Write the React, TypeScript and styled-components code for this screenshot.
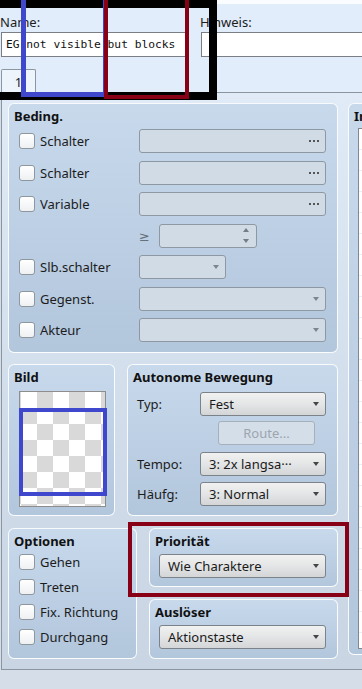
import React from 'react';
import styled, { createGlobalStyle } from 'styled-components';

const GlobalStyle = createGlobalStyle`
  html, body {
    margin: 0;
    padding: 0;
  }
  body {
    background: #d4dde8;
    font-family: 'Noto Sans', 'DejaVu Sans', sans-serif;
    font-size: 13px;
    color: #1c1c1c;
  }
`;

const Window = styled.div`
  position: relative;
  width: 362px;
  height: 689px;
  overflow: hidden;
  background: #d4dde8;
`;

const Header = styled.div`
  background: #e1edfb;
  border-top: 4px solid #fafcff;
  padding-top: 10px;
`;

const FieldRow = styled.div`
  display: flex;
  align-items: flex-start;
`;

const Field = styled.div<{ $width: number; $offset: number }>`
  display: flex;
  flex-direction: column;
  flex: none;
  width: ${(p) => p.$width}px;
  margin-left: ${(p) => p.$offset}px;
`;

const FieldLabel = styled.label`
  line-height: 16px;
  white-space: nowrap;
`;

const TextInput = styled.input`
  box-sizing: border-box;
  display: block;
  width: 100%;
  height: 25px;
  margin: 2px 0 0 1px;
  padding: 0 4px;
  border: 1px solid #7a7f86;
  border-radius: 0;
  background: #fff;
  color: #111;
  font-family: 'DejaVu Sans Mono', 'Liberation Mono', monospace;
  font-size: 11.25px;
  outline: none;
`;

const TabStrip = styled.div`
  display: flex;
  margin-top: 12px;
  padding-left: 1px;
`;

const Tab = styled.div`
  box-sizing: border-box;
  width: 35px;
  height: 23px;
  border: 1px solid #8c96a1;
  border-bottom: none;
  border-radius: 2px 2px 0 0;
  background: #eef4fb;
  text-align: center;
  line-height: 24px;
`;

const TabPage = styled.div`
  box-sizing: border-box;
  display: flex;
  align-items: flex-start;
  gap: 10px;
  width: 420px;
  height: 578px;
  margin-left: 1px;
  padding: 10px 0 0 6px;
  border: 1px solid #8b95a0;
  border-right: none;
  background: linear-gradient(#e0ebf7, #d0dce9 60%, #c9d5e2);
`;

const LeftColumn = styled.div`
  display: flex;
  flex-direction: column;
  gap: 11px;
  width: 330px;
  flex: none;
`;

const SplitRow = styled.div<{ $gapTop?: number }>`
  display: flex;
  gap: 12px;
  margin-top: ${(p) => p.$gapTop ?? 0}px;
`;

const Stack = styled.div<{ $width: number }>`
  display: flex;
  flex-direction: column;
  gap: 12px;
  width: ${(p) => p.$width}px;
`;

const Group = styled.div<{ $width?: number; $height?: number; $padBottom?: number }>`
  box-sizing: border-box;
  display: flex;
  flex-direction: column;
  flex: none;
  ${(p) => (p.$width ? `width: ${p.$width}px;` : '')}
  ${(p) => (p.$height ? `height: ${p.$height}px;` : '')}
  padding-bottom: ${(p) => p.$padBottom ?? 0}px;
  border: 1px solid rgba(255, 255, 255, 0.9);
  border-radius: 6px;
  background: linear-gradient(#c8d9ec, #b2c6dc);
`;

const GroupTitle = styled.div`
  padding: 4px 0 0 5px;
  line-height: 16px;
  font-weight: 700;
  color: #111;
  white-space: nowrap;
`;

const CondGrid = styled.div`
  display: grid;
  grid-template-columns: 120px 187px;
  grid-auto-rows: 24px;
  row-gap: 7.5px;
  margin-top: 5px;
  padding-left: 10px;
  align-items: center;
`;

const CheckRow = styled.div`
  display: flex;
  align-items: center;
  gap: 5px;
  height: 16px;
  line-height: 16px;
  white-space: nowrap;
`;

const CheckBox = styled.span`
  box-sizing: border-box;
  width: 16px;
  height: 16px;
  flex: none;
  border: 1px solid #8e979f;
  border-radius: 3px;
  background: linear-gradient(#ffffff, #eef0f2);
`;

const InputBox = styled.div<{ $width?: number; $disabled?: boolean }>`
  box-sizing: border-box;
  display: flex;
  align-items: center;
  justify-content: space-between;
  width: ${(p) => (p.$width ? `${p.$width}px` : '100%')};
  height: 24px;
  padding: 0 6px 0 8px;
  border: 1px solid ${(p) => (p.$disabled ? '#8d98a3' : '#7b828a')};
  border-radius: 3px;
  background: ${(p) =>
    p.$disabled ? '#d0dbe6' : 'linear-gradient(#f1f1f1, #e4e5e6 50%, #d4d5d6)'};
  color: #1a1a1a;
  white-space: nowrap;
  overflow: hidden;
`;

const DownArrow = styled.span<{ $disabled?: boolean }>`
  flex: none;
  width: 0;
  height: 0;
  border-left: 3.5px solid transparent;
  border-right: 3.5px solid transparent;
  border-top: 4px solid ${(p) => (p.$disabled ? '#7c858e' : '#454545')};
`;

const UpArrow = styled.span`
  width: 0;
  height: 0;
  border-left: 3.5px solid transparent;
  border-right: 3.5px solid transparent;
  border-bottom: 4px solid #747d86;
`;

const SpinArrows = styled.span`
  display: flex;
  flex-direction: column;
  align-items: center;
  gap: 7px;
  margin-right: 1px;
  & > span:last-child {
    border-bottom: none;
    border-top: 4px solid #747d86;
  }
`;

const SpinRow = styled.div`
  display: flex;
  align-items: center;
`;

const GeSign = styled.span`
  width: 20px;
  color: #66707b;
  font-size: 13px;
`;

const MoveGrid = styled.div`
  display: grid;
  grid-template-columns: 63px 126px;
  grid-auto-rows: 24px;
  row-gap: 6px;
  margin-top: 7px;
  padding-left: 9px;
  align-items: center;
`;

const RouteButton = styled.div`
  box-sizing: border-box;
  grid-column: 2;
  width: 97px;
  height: 24px;
  margin: -2px 0 0 18px;
  border: 1px solid #a6b0ba;
  border-radius: 3px;
  background: #d4dee9;
  color: #9ca5ae;
  text-align: center;
  line-height: 22px;
`;

const Preview = styled.div`
  box-sizing: border-box;
  width: 87px;
  height: 116px;
  margin: 6px 0 0 10px;
  border: 1px solid #8d8d8d;
  background-color: #fff;
  background-image: conic-gradient(#d9d9d9 25%, #fff 0 50%, #d9d9d9 0 75%, #fff 0);
  background-size: 32px 32px;
  background-position: 1px 0;
`;

const OptionList = styled.div`
  display: flex;
  flex-direction: column;
  gap: 9px;
  margin-top: 5px;
  padding-left: 10px;
`;

const PaddedCombo = styled.div`
  margin-top: 5px;
  padding-left: 9px;
`;

const ListBox = styled.div`
  box-sizing: border-box;
  height: 521px;
  margin: 4px 0 0 9px;
  border: 1px solid #828790;
  background: repeating-linear-gradient(#ffffff 0 20px, #e9eff6 20px 21px);
`;

const Mark = styled.div<{ $x: number; $y: number; $w: number; $h: number; $color: string; $t: number }>`
  position: absolute;
  box-sizing: border-box;
  left: ${(p) => p.$x}px;
  top: ${(p) => p.$y}px;
  width: ${(p) => p.$w}px;
  height: ${(p) => p.$h}px;
  border: ${(p) => p.$t}px solid ${(p) => p.$color};
  pointer-events: none;
`;

const Dots = () => (
  <svg width="10" height="2" viewBox="0 0 10 2">
    <rect x="0" y="0" width="2" height="2" fill="#555" />
    <rect x="4" y="0" width="2" height="2" fill="#555" />
    <rect x="8" y="0" width="2" height="2" fill="#555" />
  </svg>
);

const Check: React.FC<{ label: string }> = ({ label }) => (
  <CheckRow>
    <CheckBox />
    <span>{label}</span>
  </CheckRow>
);

const Combo: React.FC<{ value?: string; width?: number; disabled?: boolean }> = ({
  value,
  width,
  disabled,
}) => (
  <InputBox $width={width} $disabled={disabled}>
    <span>{value}</span>
    <DownArrow $disabled={disabled} />
  </InputBox>
);

const App: React.FC = () => {
  return (
    <>
      <GlobalStyle />
      <Window>
        <Header>
          <FieldRow>
            <Field $width={186} $offset={0}>
              <FieldLabel>Name:</FieldLabel>
              <TextInput readOnly value="EG not visible but blocks" />
            </Field>
            <Field $width={200} $offset={14}>
              <FieldLabel>Hinweis:</FieldLabel>
              <TextInput readOnly value="" />
            </Field>
          </FieldRow>
          <TabStrip>
            <Tab>1</Tab>
          </TabStrip>
        </Header>

        <TabPage>
          <LeftColumn>
            <Group $padBottom={10}>
              <GroupTitle>Beding.</GroupTitle>
              <CondGrid>
                <Check label="Schalter" />
                <InputBox $disabled>
                  <span />
                  <Dots />
                </InputBox>
                <Check label="Schalter" />
                <InputBox $disabled>
                  <span />
                  <Dots />
                </InputBox>
                <Check label="Variable" />
                <InputBox $disabled>
                  <span />
                  <Dots />
                </InputBox>
                <span />
                <SpinRow>
                  <GeSign>≥</GeSign>
                  <InputBox $width={98} $disabled>
                    <span />
                    <SpinArrows>
                      <UpArrow />
                      <UpArrow />
                    </SpinArrows>
                  </InputBox>
                </SpinRow>
                <Check label="Slb.schalter" />
                <Combo width={87} disabled />
                <Check label="Gegenst." />
                <Combo disabled />
                <Check label="Akteur" />
                <Combo disabled />
              </CondGrid>
            </Group>

            <SplitRow>
              <Group $width={107}>
                <GroupTitle>Bild</GroupTitle>
                <Preview />
              </Group>
              <Group $width={211} $padBottom={9}>
                <GroupTitle>Autonome Bewegung</GroupTitle>
                <MoveGrid>
                  <span>Typ:</span>
                  <Combo value="Fest" />
                  <RouteButton>Route...</RouteButton>
                  <span>Tempo:</span>
                  <Combo value="3: 2x langsa···" />
                  <span>Häufg:</span>
                  <Combo value="3: Normal" />
                </MoveGrid>
              </Group>
            </SplitRow>

            <SplitRow $gapTop={1}>
              <Group $width={129}>
                <GroupTitle>Optionen</GroupTitle>
                <OptionList>
                  <Check label="Gehen" />
                  <Check label="Treten" />
                  <Check label="Fix. Richtung" />
                  <Check label="Durchgang" />
                </OptionList>
              </Group>
              <Stack $width={189}>
                <Group $padBottom={8}>
                  <GroupTitle>Priorität</GroupTitle>
                  <PaddedCombo>
                    <Combo value="Wie Charaktere" width={167} />
                  </PaddedCombo>
                </Group>
                <Group $padBottom={9}>
                  <GroupTitle>Auslöser</GroupTitle>
                  <PaddedCombo>
                    <Combo value="Aktionstaste" width={167} />
                  </PaddedCombo>
                </Group>
              </Stack>
            </SplitRow>
          </LeftColumn>

          <Group $width={60} $height={552}>
            <GroupTitle>Inhalt</GroupTitle>
            <ListBox />
          </Group>
        </TabPage>

        <Mark $x={-10} $y={0} $w={227} $h={100} $color="#000" $t={8} />
        <Mark $x={21} $y={-10} $w={87} $h={107} $color="#3f48cc" $t={5} />
        <Mark $x={104} $y={-10} $w={85} $h={109} $color="#880015" $t={4} />
        <Mark $x={19} $y={408} $w={88} $h={88} $color="#3f48cc" $t={4} />
        <Mark $x={128} $y={522} $w={221} $h={75} $color="#880015" $t={4} />
      </Window>
    </>
  );
};

export default App;
